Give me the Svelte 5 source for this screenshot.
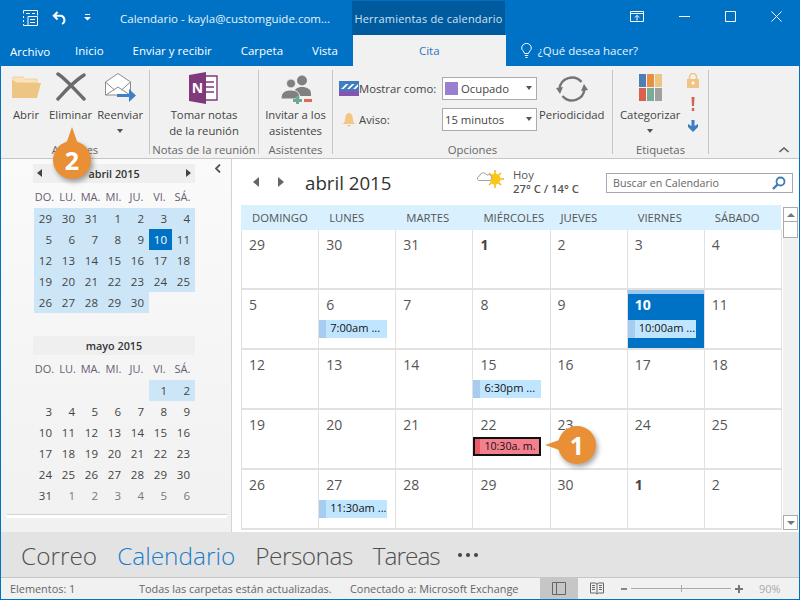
<script lang="ts">
  const weekdays = ['DO.', 'LU.', 'MA.', 'MI.', 'JU.', 'VI.', 'SÁ.'];
  const april = [29, 30, 31, 1, 2, 3, 4, 5, 6, 7, 8, 9, 10, 11, 12, 13, 14, 15, 16, 17, 18, 19, 20, 21, 22, 23, 24, 25, 26, 27, 28, 29, 30];
  const may = ['', '', '', '', '', 1, 2, 3, 4, 5, 6, 7, 8, 9, 10, 11, 12, 13, 14, 15, 16, 17, 18, 19, 20, 21, 22, 23, 24, 25, 26, 27, 28, 29, 30, 31, 1, 2, 3, 4, 5, 6];
  const heads = ['DOMINGO', 'LUNES', 'MARTES', 'MIÉRCOLES', 'JUEVES', 'VIERNES', 'SÁBADO'];
  const events: Record<number, string> = { 8: '7:00am ...', 12: '10:00am ...', 17: '6:30pm ...', 29: '11:30am ...' };
  const days = [29, 30, 31, 1, 2, 3, 4, 5, 6, 7, 8, 9, 10, 11, 12, 13, 14, 15, 16, 17, 18, 19, 20, 21, 22, 23, 24, 25, 26, 27, 28, 29, 30, 1, 2];
  const tabs = ['Inicio', 'Enviar y recibir', 'Carpeta', 'Vista'];
</script>

<div class="window">
  <header class="titlebar">
    <svg class="qat-cal" width="17" height="18" viewBox="0 0 17 18" fill="none" stroke="#fff">
      <path d="M1.5 1.5h14v5M1.5 1.5v3M1.5 7v2M1.5 11v2M1.5 15v1.5h14v-9H6v9" />
      <path d="M4 4.5h4M10 4.5h3M8 10.5h5M8 13.5h5" />
    </svg>
    <svg class="qat-undo" width="15" height="14" viewBox="0 0 15 14" fill="none" stroke="#fff" stroke-width="2">
      <path d="M5.5 1L1.8 4.8l3.7 3.7M2 4.8h6.5a4.2 4.2 0 0 1 1.5 8" />
    </svg>
    <svg class="qat-more" width="7" height="7" viewBox="0 0 7 7" fill="#fff"><path d="M1 0h5v1H1zM0 3h7L3.5 6.5z" /></svg>
    <span class="doc-title">Calendario - kayla@customguide.com...</span>
    <span class="context-tab">Herramientas de calendario</span>
    <div class="win-buttons">
      <svg width="14" height="11" viewBox="0 0 14 11" fill="none" stroke="#fff"><path d="M.5.5h13v10H.5zM.5 2.5h13M7 9.5V4.5M4.8 6.5L7 4.3l2.2 2.2" /></svg>
      <svg width="11" height="11" viewBox="0 0 11 11" fill="none" stroke="#fff"><path d="M0 5.5h11" /></svg>
      <svg width="11" height="11" viewBox="0 0 11 11" fill="none" stroke="#fff"><path d="M.5.5h10v10H.5z" /></svg>
      <svg width="11" height="11" viewBox="0 0 11 11" fill="none" stroke="#fff"><path d="M.5.5l10 10M10.5.5l-10 10" /></svg>
    </div>
  </header>

  <nav class="tabrow">
    <span class="tab file">Archivo</span>
    {#each tabs as t}
      <span class="tab">{t}</span>
    {/each}
    <span class="tab active">Cita</span>
    <span class="tell">
      <svg width="11" height="15" viewBox="0 0 11 15" fill="none" stroke="#fff"><path d="M3.5 10.5C3 8 .7 7.500.7 5a4.800 4.600 0 0 1 9.600 0c0 2.500-2.300 3-2.800 5.500zM3.800 12.500h3.400M4.500 14.500h2" /></svg>
      ¿Qué desea hacer?
    </span>
  </nav>

  <section class="ribbon">
    <div class="group g1">
      <div class="controls">
        <div class="rb">
          <svg class="ic" width="30" height="32" viewBox="0 0 30 32">
            <path d="M2 8V5h10l2 2h12v4H2z" fill="#f9e3b8" stroke="#e5c588" stroke-width=".6" />
            <path d="M7 11h23l-4 15H1V8z" fill="#efc584" />
          </svg>
          <span>Abrir</span>
        </div>
        <div class="rb del">
          <svg class="ic" width="30" height="32" viewBox="0 0 30 32" fill="none">
            <path d="M2 2c8 5 16 15 26 25M28 3C17 10 10 18 2 27" stroke="#6b6b6b" stroke-width="3.400" stroke-linecap="round" />
          </svg>
          <span>Eliminar</span>
        </div>
        <div class="rb">
          <svg class="ic" width="32" height="32" viewBox="0 0 32 32" fill="none">
            <path d="M1.500 10L14 1.500 26.500 10v13h-25z" fill="#fff" stroke="#8a8a8a" />
            <path d="M1.500 10l9 8M26.500 10l-9 8M2 23l12-8 12 8" stroke="#8a8a8a" />
            <path d="M13 25h12v-5l7 6.500-7 6.500v-5H13z" fill="#3f80c4" transform="translate(0 -3)" />
          </svg>
          <span>Reenviar</span>
          <i class="caret"></i>
        </div>
      </div>
      <div class="group-label">Acciones</div>
    </div>

    <div class="group g2">
      <div class="controls">
        <div class="rb">
          <svg class="ic" width="32" height="32" viewBox="0 0 32 32">
            <path d="M14 4h15v24H14z" fill="#fff" stroke="#80397b" stroke-width="1.400" />
            <path d="M17 10h9M17 15h9M17 20h9" stroke="#80397b" stroke-width="1.400" />
            <path d="M1 3L18 0v32L1 29z" fill="#80397b" />
            <text x="9.500" y="21" class="onenote">N</text>
          </svg>
          <span class="center">Tomar notas<br />de la reunión</span>
        </div>
      </div>
      <div class="group-label">Notas de la reunión</div>
    </div>

    <div class="group g3">
      <div class="controls">
        <div class="rb">
          <svg class="ic" width="32" height="32" viewBox="0 0 32 32">
            <circle cx="22" cy="8.500" r="5" fill="#808080" />
            <path d="M14 22c0-5 3-7 8-7s9 2 9 7v2H14z" fill="#808080" />
            <circle cx="11" cy="11.500" r="4.500" fill="#808080" stroke="#f1f1f1" />
            <path d="M1 27c0-7 4-9 10-9s9 3 9 9z" fill="#808080" stroke="#f1f1f1" />
            <path d="M13 27h3v-3h3v3h3v3h-3v3h-3v-3h-3z" fill="#6fa892" />
            <path d="M24 27h8v3h-8z" fill="#dd6a52" />
          </svg>
          <span class="center">Invitar a los<br />asistentes</span>
        </div>
      </div>
      <div class="group-label">Asistentes</div>
    </div>

    <div class="group g4">
      <div class="controls">
        <div class="fields">
          <div class="field">
            <svg width="20" height="15" viewBox="0 0 20 15">
              <path d="M0 0h20v10H0z" fill="#3f7cc0" />
              <path d="M2 8l5-5h2.500l-5 5zM8 8l5-5h2.500l-5 5zM14 8l5-5v2.500l-2.500 2.500z" fill="#fff" />
              <path d="M0 10h20v5H0z" fill="#8655b0" />
            </svg>
            <label for="show">Mostrar como:</label>
            <div id="show" class="select"><i class="swatch"></i>Ocupado<i class="sel-caret"></i></div>
          </div>
          <div class="field">
            <svg width="20" height="15" viewBox="0 0 20 15" fill="#f3c683">
              <path d="M5 11c1-2 1-4 1.500-6.500C7 2 8.500 1 10 1s3 1 3.500 3.500C14 7 14 9 15 11l2 1H3z" />
              <path d="M8 13h4l-2 2z" />
            </svg>
            <label for="remind">Aviso:</label>
            <div id="remind" class="select">15 minutos<i class="sel-caret"></i></div>
          </div>
        </div>
        <div class="rb recur">
          <svg class="ic" width="32" height="30" viewBox="0 0 32 30" fill="none" stroke="#757575" stroke-width="2.400">
            <path d="M3.500 15a12.500 12.500 0 0 1 22-7M28.500 15a12.500 12.500 0 0 1-22 7" />
            <path d="M0 14l7-1-3 7z" fill="#757575" stroke="none" />
            <path d="M32 16l-7 1 3-7z" fill="#757575" stroke="none" />
          </svg>
          <span>Periodicidad</span>
        </div>
      </div>
      <div class="group-label">Opciones</div>
    </div>

    <div class="group g5">
      <div class="controls">
        <div class="rb">
          <div class="swatches">
            <i class="c1"></i><i class="c2"></i><i class="c3"></i>
            <i class="c4"></i><i class="c5"></i><i class="c6"></i>
          </div>
          <span>Categorizar</span>
          <i class="caret"></i>
        </div>
        <div class="flags">
          <svg width="12" height="15" viewBox="0 0 12 15" fill="#f0c583">
            <path d="M0 6h12v9H0z" />
            <path d="M2.500 6V4a3.500 3.500 0 0 1 7 0v2" fill="none" stroke="#f0c583" stroke-width="1.600" />
            <circle cx="6" cy="10" r="1.500" fill="#fff" />
          </svg>
          <svg width="12" height="14" viewBox="0 0 12 14" fill="#d9604a"><path d="M4.500 0h3L7 9H5zM4.800 11h2.400v3H4.800z" /></svg>
          <svg width="12" height="12" viewBox="0 0 12 12" fill="#3f7cc0"><path d="M4.500 0h3v6L11 4v3l-5 5-5-5V4l3.500 2z" /></svg>
        </div>
      </div>
      <div class="group-label">Etiquetas</div>
    </div>

    <svg class="collapse" width="10" height="6" viewBox="0 0 10 6" fill="none" stroke="#666" stroke-width="1.600"><path d="M.5 5L5 1l4.500 4" /></svg>
  </section>

  <div class="body">
    <aside class="pane">
      <div class="mini">
        <div class="mini-head"><i class="arr left"></i><b>abril 2015</b><i class="arr right"></i></div>
        <div class="mini-grid wk">
          {#each weekdays as d}<span>{d}</span>{/each}
        </div>
        <div class="mini-grid">
          {#each april as d, i}
            <span class="num on" class:today={i === 12}>{d}</span>
          {/each}
        </div>
      </div>
      <div class="mini second">
        <div class="mini-head"><b>mayo 2015</b></div>
        <div class="mini-grid wk">
          {#each weekdays as d}<span>{d}</span>{/each}
        </div>
        <div class="mini-grid">
          {#each may as d, i}
            <span class="num" class:on={i === 5 || i === 6} class:next={i > 35}>{d}</span>
          {/each}
        </div>
      </div>
      <div class="pane-rule"></div>
      <svg class="pane-toggle" width="6" height="9" viewBox="0 0 6 9" fill="none" stroke="#555" stroke-width="1.800"><path d="M5 .5L1 4.500 5 8.500" /></svg>
    </aside>

    <main class="cal">
      <div class="cal-head">
        <i class="big-arr left"></i>
        <i class="big-arr right"></i>
        <h1>abril 2015</h1>
        <svg class="weather" width="28" height="20" viewBox="0 0 28 20">
          <g stroke="#f5b81c" stroke-width="1.500"><path d="M18 1v18M9 10h18M12 4l12 12M24 4L12 16" /></g>
          <circle cx="18" cy="10" r="5.500" fill="#fdc516" />
          <path d="M1.500 11.500a2.500 2.500 0 0 1 1-4.500 4 4 0 0 1 7.500-1 3 3 0 0 1 3 5.500z" fill="#fff" stroke="#a3a3a3" />
        </svg>
        <div class="temp"><span>Hoy</span><b>27° C / 14° C</b></div>
        <div class="search">
          <span>Buscar en Calendario</span>
          <svg width="14" height="14" viewBox="0 0 14 14" fill="none" stroke="#3f7cb5" stroke-width="1.800">
            <circle cx="8.500" cy="5.500" r="4" />
            <path d="M5.500 8.500L1 13" stroke-width="2.400" />
          </svg>
        </div>
      </div>
      <div class="cal-row">
        <div class="month">
          {#each heads as h}<div class="wk-head">{h}</div>{/each}
          {#each days as d, i}
            <div class="cell" class:current={i === 12}>
              <span class="day" class:bold={i === 3 || i === 33 || i === 12}>{d}</span>
              {#if events[i]}
                <div class="event"><i></i><span>{events[i]}</span></div>
              {/if}
              {#if i === 24}
                <div class="event selected"><i></i><span>10:30a. m.</span></div>
              {/if}
            </div>
          {/each}
        </div>
        <div class="scroll">
          <div class="sb-btn up"><i></i></div>
          <div class="sb-thumb"></div>
          <div class="sb-track"></div>
          <div class="sb-btn down"><i></i></div>
        </div>
      </div>
    </main>
  </div>

  <nav class="modules">
    <span>Correo</span>
    <span class="sel">Calendario</span>
    <span class="people">Personas</span>
    <span class="tasks">Tareas</span>
    <b class="dots"><i></i><i></i><i></i></b>
  </nav>

  <footer class="status">
    <span class="s1">Elementos: 1</span>
    <span class="s2">Todas las carpetas están actualizadas.</span>
    <span class="s3">Conectado a: Microsoft Exchange</span>
    <div class="view on">
      <svg width="14" height="13" viewBox="0 0 14 13" fill="none" stroke="#666"><path d="M.5.5h13v12H.5zM4.500.5v12" /></svg>
    </div>
    <div class="view">
      <svg width="14" height="13" viewBox="0 0 14 13" fill="none" stroke="#666"><path d="M.5 1h5l1.500 1 1.500-1h5v10h-5l-1.500 1-1.500-1h-5zM7 2v10M2 3.500h3M2 5.500h3M2 7.500h3M9 3.500h3M9 5.500h3M9 7.500h3" /></svg>
    </div>
    <div class="zoom">
      <i class="minus"></i>
      <div class="track"><i></i></div>
      <i class="plus"></i>
    </div>
    <span class="pct">90%</span>
  </footer>

  <div class="callout one"><i></i><b>1</b></div>
  <div class="callout two"><i></i><b>2</b></div>
</div>

<style>
  :global(body) {
    margin: 0;
  }

  .window {
    position: relative;
    box-sizing: border-box;
    width: 800px;
    height: 600px;
    display: flex;
    flex-direction: column;
    overflow: hidden;
    background: #fff;
    border: 1px solid #0072c6;
    border-top: 0;
    font-family: "Open Sans", "Noto Sans", sans-serif;
    font-size: 11.3px;
    color: #444;
  }

  i {
    display: block;
    font-style: normal;
  }

  .titlebar {
    height: 35px;
    flex: none;
    display: flex;
    align-items: center;
    background: #0072c6;
    color: #fff;
  }

  .qat-cal {
    margin-left: 21px;
  }

  .qat-undo {
    margin-left: 13px;
  }

  .qat-more {
    margin-left: 17px;
  }

  .doc-title {
    margin: 2px 0 0 29px;
    width: 232px;
    white-space: nowrap;
    color: #e8f2fa;
    font-size: 11.5px;
  }

  .context-tab {
    width: 153px;
    height: 34px;
    margin-top: 1px;
    display: flex;
    align-items: center;
    justify-content: center;
    background: #005a9e;
    color: #cfe3f3;
    font-size: 11px;
    letter-spacing: 0.2px;
    white-space: nowrap;
  }

  .win-buttons {
    flex: 1;
    display: flex;
    align-items: center;
    padding-left: 125px;
    gap: 35px;
    margin-bottom: 3px;
  }

  .tabrow {
    height: 31px;
    flex: none;
    display: flex;
    background: #0072c6;
    color: #fff;
    position: relative;
    font-size: 11.5px;
  }

  .tab {
    display: flex;
    align-items: center;
    white-space: nowrap;
    margin-left: 29px;
  }

  .tab.file {
    margin-left: 9px;
    margin-right: -4px;
    padding-top: 2px;
  }

  .tab.active {
    width: 153px;
    justify-content: center;
    background: #f1f1f1;
    color: #2b78c5;
    margin-left: 15px;
  }

  .tell {
    display: flex;
    align-items: center;
    gap: 6px;
    margin-left: 15px;
    color: #e8f2fa;
  }

  .ribbon {
    position: relative;
    flex: none;
    display: flex;
    background: #f1f1f1;
    border-bottom: 1px solid #c6c6c6;
    box-sizing: border-box;
    height: 93px;
  }

  .group {
    display: flex;
    flex-direction: column;
    box-sizing: border-box;
    margin-top: 4px;
    height: 84px;
    border-right: 1px solid #c6c6c6;
  }

  .g1 { width: 149px; }
  .g2 { width: 109px; }
  .g3 { width: 74px; }
  .g4 { width: 280px; }
  .g5 { width: 96px; }

  .controls {
    flex: 1;
    display: flex;
    min-height: 0;
  }

  .g1 .controls {
    padding-left: 10px;
    gap: 5px;
  }

  .del {
    margin-left: 3px;
  }

  .g2 .controls,
  .g3 .controls {
    justify-content: center;
  }

  .group-label {
    height: 17px;
    line-height: 17px;
    margin-bottom: -4px;
    text-align: center;
    color: #666;
    white-space: nowrap;
  }

  .rb {
    display: flex;
    flex-direction: column;
    align-items: center;
    white-space: nowrap;
    line-height: 16px;
  }

  .rb .center {
    text-align: center;
  }

  .ic {
    height: 32px;
    margin: 2px 0 3px;
    flex: none;
  }

  .onenote {
    font: bold 14px "Open Sans", sans-serif;
    fill: #fff;
    text-anchor: middle;
  }

  .caret {
    width: 0;
    height: 0;
    margin-top: 6px;
    border: 3px solid transparent;
    border-top: 4px solid #555;
    border-bottom: 0;
  }

  .fields {
    margin: 7px 0 0 6px;
    display: flex;
    flex-direction: column;
    gap: 8px;
  }

  .field {
    position: relative;
    display: flex;
    align-items: center;
    height: 23px;
    gap: 0;
  }

  .field label {
    width: 83px;
    white-space: nowrap;
  }

  .select {
    box-sizing: border-box;
    width: 95px;
    height: 23px;
    display: flex;
    align-items: center;
    padding-left: 2px;
    background: #fff;
    border: 1px solid #ababab;
    position: relative;
    white-space: nowrap;
  }

  .swatch {
    width: 13px;
    height: 13px;
    margin: 0 3px 0 0;
    background: #9a7fd1;
  }

  .sel-caret {
    position: absolute;
    right: 4px;
    top: 8px;
    border: 3px solid transparent;
    border-top: 4px solid #555;
    border-bottom: 0;
  }

  .recur {
    margin-left: 2px;
  }

  .g4 .recur .ic {
    height: 30px;
    margin: 4px 0 3px;
  }

  .g5 .controls {
    padding-left: 7px;
  }

  .swatches {
    display: grid;
    grid-template-columns: repeat(3, 7px);
    grid-auto-rows: 13px;
    gap: 1px;
    margin: 4px 0 6px;
  }

  .swatches .c1 { background: #4d7fb5; }
  .swatches .c2 { background: #e98f45; }
  .swatches .c3 { background: #ecc583; }
  .swatches .c4 { background: #d9604a; }
  .swatches .c5 { background: #78ab99; }
  .swatches .c6 { background: #a0a0a0; }

  .flags {
    margin: 3px 0 0 7px;
    display: flex;
    flex-direction: column;
    align-items: center;
    gap: 9px;
  }

  .collapse {
    position: absolute;
    right: 10px;
    bottom: 5px;
  }

  .body {
    flex: 1;
    display: flex;
    min-height: 0;
  }

  .pane {
    position: relative;
    box-sizing: border-box;
    width: 230px;
    flex: none;
    padding: 5px 0 0 32px;
    background: linear-gradient(#fafafa, #f1f1f1);
  }

  .mini {
    width: 162px;
  }

  .mini.second {
    margin-top: 23px;
  }

  .mini-head {
    height: 19px;
    display: flex;
    align-items: center;
    justify-content: center;
    position: relative;
    background: #efefef;
    color: #333;
  }

  .mini-head b {
    font-size: 10.8px;
    font-weight: 600;
  }

  .arr {
    position: absolute;
    top: 5px;
    border: 4.5px solid transparent;
  }

  .arr.left {
    left: 4px;
    border-right: 5px solid #444;
    border-left: 0;
  }

  .arr.right {
    right: 4px;
    border-left: 5px solid #444;
    border-right: 0;
  }

  .mini-grid {
    display: grid;
    grid-template-columns: repeat(7, 23px);
    grid-auto-rows: 21px;
    margin-left: 1px;
    width: 161px;
  }

  .mini-grid.wk {
    margin: 3px 0 1px;
    width: 162px;
    color: #6a5c72;
    font-size: 11px;
    line-height: 21px;
    text-align: center;
  }

  .mini-grid .num {
    line-height: 21px;
    text-align: right;
    padding-right: 5px;
    box-sizing: border-box;
    font-size: 11.5px;
  }

  .num.on {
    background: #cde6f7;
  }

  .num.next {
    color: #777;
  }

  .num.today {
    background: #0072c6;
    color: #fff;
  }

  .pane-rule {
    position: absolute;
    left: 6px;
    right: 4px;
    top: 355px;
    height: 3px;
    background: #fff;
    border-top: 1px solid #d4d4d4;
  }

  .pane-toggle {
    position: absolute;
    right: 10px;
    top: 5px;
  }

  .cal {
    flex: 1;
    min-width: 0;
    display: flex;
    flex-direction: column;
    border-left: 1px solid #d4d4d4;
  }

  .cal-head {
    height: 46px;
    flex: none;
    display: flex;
    align-items: center;
    position: relative;
  }

  .big-arr {
    border: 5px solid transparent;
  }

  .big-arr.left {
    margin-left: 21px;
    border-right: 6px solid #666;
    border-left: 0;
  }

  .big-arr.right {
    margin-left: 19px;
    border-left: 6px solid #666;
    border-right: 0;
  }

  h1 {
    margin: 0 0 0 21px;
    font-size: 18.7px;
    font-weight: 400;
    color: #333;
    width: 172px;
    white-space: nowrap;
  }

  .weather {
    margin-bottom: 6px;
  }

  .temp {
    display: flex;
    flex-direction: column;
    margin-left: 8px;
    width: 93px;
    line-height: 14px;
    color: #555;
    white-space: nowrap;
  }

  .temp b {
    font-weight: 600;
  }

  .search {
    box-sizing: border-box;
    width: 187px;
    height: 20px;
    margin-top: 1px;
    display: flex;
    align-items: center;
    justify-content: space-between;
    padding: 0 6px;
    border: 1px solid #a6a6b4;
    font-size: 10.7px;
    color: #666;
  }

  .cal-row {
    flex: 1;
    min-height: 0;
    display: flex;
    padding-left: 9px;
  }

  .month {
    width: 540px;
    height: 325px;
    display: grid;
    grid-template-columns: repeat(7, 1fr);
    grid-template-rows: 25px repeat(5, 60px);
    flex: none;
  }

  .wk-head {
    background: #d9f0fe;
    line-height: 25px;
    padding-left: 11px;
    color: #555;
    font-size: 11.3px;
    white-space: nowrap;
  }

  .cell {
    position: relative;
    box-sizing: border-box;
    border-bottom: 2px solid #e1e1e1;
    border-left: 1px solid #e1e1e1;
    padding: 5px 0 0 7px;
    min-width: 0;
  }

  .cell:nth-child(7n) {
    box-shadow: 1px 0 0 #e1e1e1;
  }

  .cell.current {
    background: #0072c6;
    color: #fff;
    border-top: 4px solid #9cc8ee;
    padding-top: 1px;
  }

  .day {
    display: block;
    font-size: 14px;
    line-height: 20px;
    color: #555;
  }

  .current .day {
    color: #fff;
  }

  .day.bold {
    font-weight: 700;
    color: #444;
  }

  .current .day.bold {
    color: #fff;
  }

  .event {
    position: absolute;
    left: 0;
    top: 30px;
    width: 68px;
    height: 18px;
    display: flex;
    align-items: center;
    background: #c0e6ff;
    color: #111;
    font-size: 11.1px;
    white-space: nowrap;
  }

  .event span {
    padding-bottom: 3px;
  }

  .current .event {
    top: 26px;
  }

  .event i {
    width: 7px;
    height: 100%;
    background: #a6cdf0;
    margin-right: 4px;
    flex: none;
  }

  .event.selected {
    top: 27px;
    height: 19px;
    box-sizing: border-box;
    border: 2px solid #111;
    background: #f4808e;
    font-size: 10.6px;
  }

  .event.selected span {
    padding-bottom: 1px;
  }

  .event.selected i {
    width: 5px;
    background: #ea5a6c;
    margin-right: 4px;
  }

  .scroll {
    width: 15px;
    height: 323px;
    margin: 2px 0 0 2px;
    display: flex;
    flex-direction: column;
    background: #f1f1f1;
  }

  .sb-btn {
    box-sizing: border-box;
    width: 15px;
    height: 15px;
    border: 1px solid #ababab;
    background: #fff;
    display: flex;
    align-items: center;
    justify-content: center;
    flex: none;
  }

  .sb-btn i {
    border: 4px solid transparent;
    border-top: 0;
    border-bottom: 4px solid #777;
  }

  .sb-btn.down i {
    border-bottom: 0;
    border-top: 4px solid #777;
  }

  .sb-thumb {
    box-sizing: border-box;
    height: 16px;
    flex: none;
    border: 1px solid #ababab;
    border-top: 0;
    background: #fff;
  }

  .sb-track {
    flex: 1;
  }

  .modules {
    height: 45px;
    flex: none;
    box-sizing: border-box;
    display: flex;
    align-items: center;
    background: #e3e3e3;
    padding: 1px 0 0 20px;
    gap: 20px;
    font-size: 24.4px;
    font-weight: 300;
    color: #505050;
  }

  .modules .sel {
    color: #1b7ccb;
  }

  .modules .people {
    letter-spacing: -0.5px;
  }

  .modules .tasks {
    letter-spacing: -1px;
  }

  .dots {
    display: flex;
    gap: 4px;
    margin-left: -2px;
  }

  .dots i {
    width: 4px;
    height: 4px;
    border-radius: 50%;
    background: #444;
  }

  .status {
    height: 22px;
    flex: none;
    box-sizing: border-box;
    display: flex;
    align-items: center;
    background: #f1f1f1;
    border-top: 1px solid #c6c6c6;
    font-size: 10.9px;
    color: #666;
    white-space: nowrap;
  }

  .s1 {
    margin: 0 0 1px 9px;
    width: 129px;
  }

  .s2 {
    margin-bottom: 1px;
    width: 211px;
  }

  .s3 {
    margin-bottom: 1px;
    width: 190px;
  }

  .view {
    width: 38px;
    height: 100%;
    display: flex;
    align-items: center;
    justify-content: center;
  }

  .view.on {
    background: #c6c6c6;
  }

  .zoom {
    display: flex;
    align-items: center;
    margin-left: 5px;
    gap: 4px;
  }

  .minus {
    width: 6px;
    height: 2px;
    background: #888;
  }

  .track {
    position: relative;
    width: 100px;
    height: 1px;
    background: #aaa;
  }

  .track i {
    position: absolute;
    left: 50px;
    top: -3px;
    width: 1px;
    height: 7px;
    background: #aaa;
  }

  .plus {
    width: 8px;
    height: 8px;
    background:
      linear-gradient(#777, #777) center / 8px 2px no-repeat,
      linear-gradient(#777, #777) center / 2px 8px no-repeat;
  }

  .pct {
    margin-left: 16px;
    color: #aaa;
  }

  .callout {
    position: absolute;
    width: 38px;
    height: 38px;
    border-radius: 50%;
    background: #e98f36;
    box-shadow: 2px 3px 5px rgba(0, 0, 0, 0.35);
    display: flex;
    align-items: center;
    justify-content: center;
    color: #fff;
  }

  .callout b {
    position: relative;
    font-size: 25px;
    font-weight: 700;
  }

  .callout i {
    position: absolute;
    width: 0;
    height: 0;
    border: 7px solid transparent;
  }

  .callout.one {
    left: 557px;
    top: 426px;
  }

  .callout.one i {
    left: -13px;
    top: 12px;
    border-left: 0;
    border-right: 20px solid #e98f36;
  }

  .callout.two {
    left: 52px;
    top: 141px;
  }

  .callout.two i {
    left: 12px;
    top: -14px;
    border-top: 0;
    border-bottom: 20px solid #e98f36;
  }
</style>
